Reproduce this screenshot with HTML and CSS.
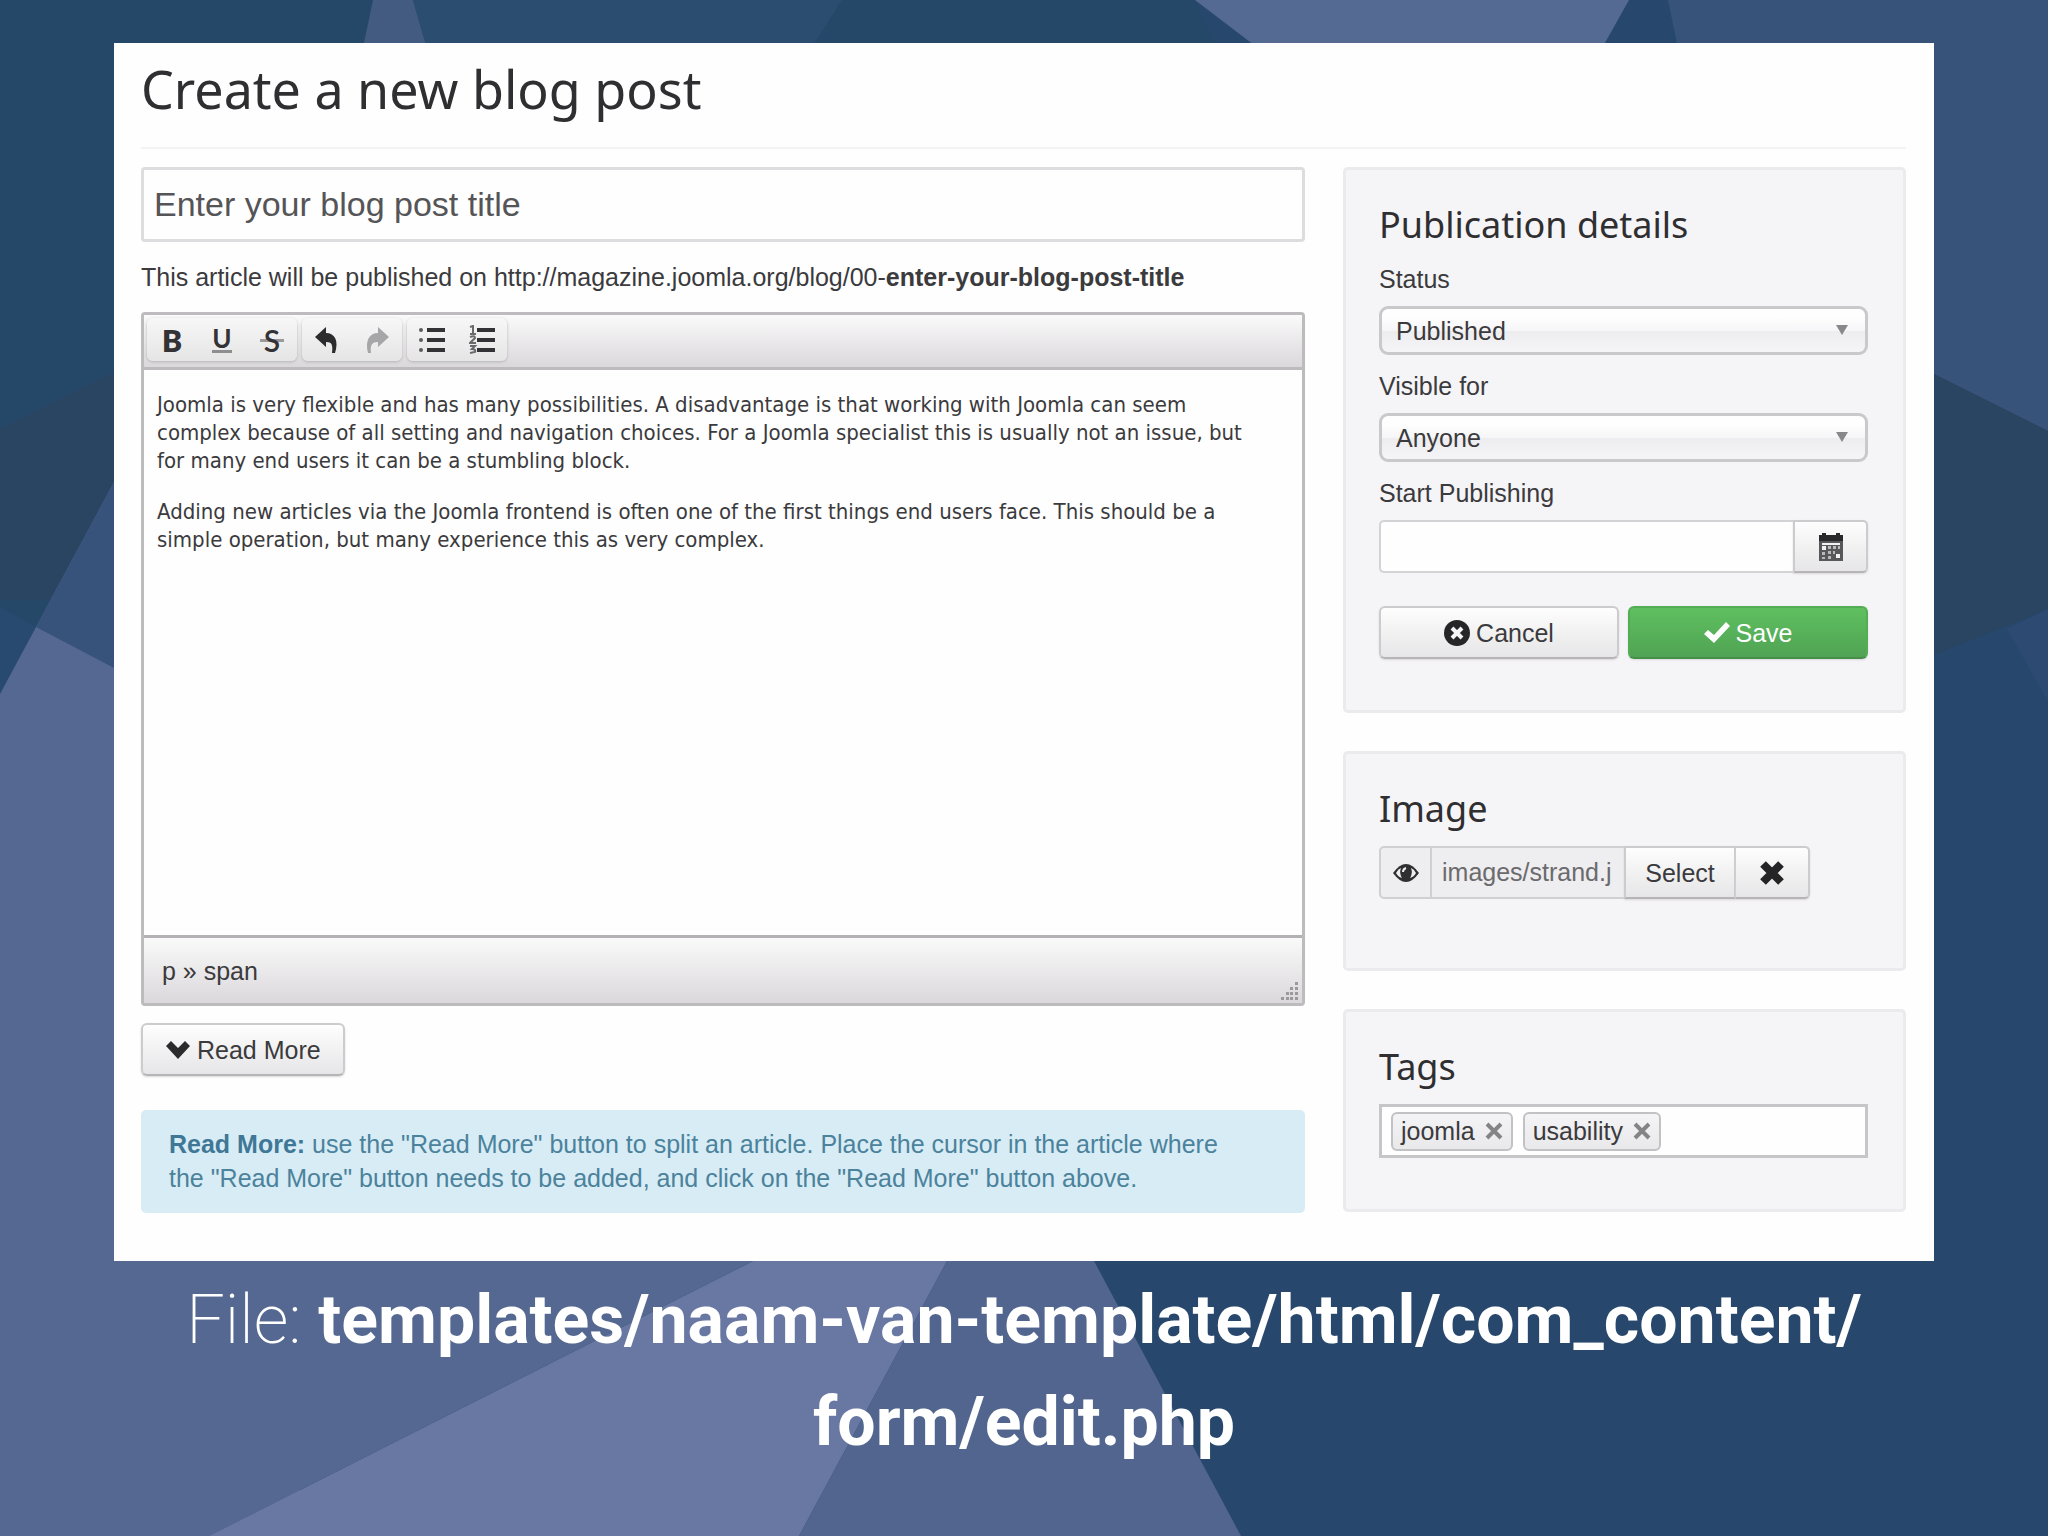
FILE: index.html
```html
<!DOCTYPE html>
<html lang="en">
<head>
<meta charset="utf-8">
<meta name="viewport" content="width=device-width, initial-scale=1">
<title>Create a new blog post</title>
<link rel="stylesheet" href="styles.css">
</head>
<body>
<svg class="backdrop" viewBox="0 0 2048 1536" preserveAspectRatio="none" aria-hidden="true">
  <rect width="2048" height="1536" fill="#27486c"/>
  <path d="M0 0H1195L1500 700H0Z" fill="#254869"/>
  <path d="M373 0H413L500 300H310Z" fill="#435a81"/>
  <path d="M413 0H842L650 300H500Z" fill="#2b4d70"/>
  <path d="M1195 0H1629L1500 230L1300 80Z" fill="#546a93"/>
  <path d="M1668 0H2048V431L1934 374L1720 250Z" fill="#38537a"/>
  <path d="M0 429L114 372L300 340V600H0Z" fill="#2a4562"/>
  <path d="M0 607L36 627L0 694Z" fill="#284a70"/>
  <path d="M0 694L114 482L300 300V1536H0Z" fill="#556891"/>
  <path d="M36 627L114 482H300V700L114 668Z" fill="#38537b"/>
  <path d="M1934 374L2048 431V609L1934 655L1800 660V340Z" fill="#2a4561"/>
  <path d="M2048 609L2007 629L2048 701Z" fill="#2d4b72"/>
  <path d="M0 1200H783L209 1536H0Z" fill="#556891"/>
  <path d="M753 1261H947L799 1536H209Z" fill="#6878a3"/>
  <path d="M0 1200H783L753 1261L209 1536H0Z" fill="#556891"/>
  <path d="M947 1261H1094L1241 1536H799Z" fill="#51658f"/>
</svg>

<main class="slide">
  <form class="post-form" onsubmit="return false">
    <header class="page-header"><h1>Create a new blog post</h1></header>
    <div class="columns">
      <section class="main-column">
        <input class="title-input" type="text" value="Enter your blog post title" aria-label="Blog post title">
        <p class="permalink">This article will be published on http://magazine.joomla.org/blog/00-<strong>enter-your-blog-post-title</strong></p>

        <div class="editor">
          <div class="toolbar">
            <div class="tool-group">
              <button type="button" class="tool tool-bold" aria-label="Bold">B</button>
              <button type="button" class="tool tool-underline" aria-label="Underline"><span>U</span></button>
              <button type="button" class="tool tool-strike" aria-label="Strikethrough"><span>S</span></button>
            </div>
            <div class="tool-group">
              <button type="button" class="tool" aria-label="Undo"><svg width="24" height="26" viewBox="0 0 24 26"><path d="M0 10L11 0V6C20 6 24 14 20 26H17C18 18 17 15 11 15V20Z" fill="#2c2c2e"/></svg></button>
              <button type="button" class="tool" aria-label="Redo"><svg width="24" height="26" viewBox="0 0 24 26"><path d="M24 10L13 0V6C4 6 0 14 3 26H6C5 18 7 15 13 15V20Z" fill="#a6a6a8"/></svg></button>
            </div>
            <div class="tool-group">
              <button type="button" class="tool" aria-label="Bulleted list"><svg width="26" height="26" viewBox="0 0 26 26"><path d="M8 1h18v4H8zM8 11h18v4H8zM8 21h18v4H8z" fill="#333335"/><g fill="#5a5a5c"><circle cx="2" cy="3" r="2"/><circle cx="2" cy="13" r="2"/><circle cx="2" cy="23" r="2"/></g></svg></button>
              <button type="button" class="tool" aria-label="Numbered list"><svg width="26" height="30" viewBox="0 0 26 30"><path d="M8 3h18v4H8zM8 13h18v4H8zM8 23h18v4H8z" fill="#333335"/><path d="M1 2l3-1v8M1 9h6M1 12q5-2 5 1L1 18h6M1 21h5l-3 3q4 0 3 3l-5 1" fill="none" stroke="#6a6a6c" stroke-width="2"/></svg></button>
            </div>
          </div>
          <div class="editor-body" contenteditable="true" role="textbox" aria-label="Article text" spellcheck="false">
            <p>Joomla is very flexible and has many possibilities. A disadvantage is that working with Joomla can seem complex because of all setting and navigation choices. For a Joomla specialist this is usually not an issue, but for many end users it can be a stumbling block.</p>
            <p>Adding new articles via the Joomla frontend is often one of the first things end users face. This should be a simple operation, but many experience this as very complex.</p>
          </div>
          <div class="statusbar">
            <span>p » span</span>
            <svg class="grip" width="18" height="18" viewBox="0 0 18 18" aria-hidden="true"><path d="M14 0h3v3h-3zM14 5h3v3h-3zM14 10h3v3h-3zM14 15h3v3h-3zM9 5h3v3H9zM9 10h3v3H9zM9 15h3v3H9zM5 10h3v3H5zM5 15h3v3H5zM0 15h3v3H0z" fill="#9b999b"/></svg>
          </div>
        </div>

        <button type="button" class="btn read-more"><svg width="26" height="20" viewBox="0 0 26 20" aria-hidden="true"><path d="M1 6L6 1L13 8L20 1L25 6L13 19Z" fill="#2b2b2d"/></svg>Read More</button>

        <p class="alert"><strong>Read More:</strong> use the "Read More" button to split an article. Place the cursor in the article where the "Read More" button needs to be added, and click on the "Read More" button above.</p>
      </section>

      <aside class="side-column">
        <section class="well">
          <h2>Publication details</h2>
          <label for="status">Status</label>
          <div class="select-wrap"><select id="status"><option>Published</option></select></div>
          <label for="visible">Visible for</label>
          <div class="select-wrap"><select id="visible"><option>Anyone</option></select></div>
          <label for="start">Start Publishing</label>
          <div class="date-group">
            <input id="start" type="text">
            <button type="button" class="btn" aria-label="Choose date"><svg width="26" height="28" viewBox="0 0 26 28"><path d="M1 2h3V0h4v2h10V0h4v2h3v6H1z" fill="#29292b"/><path d="M1 8h24v20H1z" fill="#58585a"/><path d="M4 10h18v2H4zM4 13h4v4H4zM18 21h4v4h-4z" fill="#f2f2f3"/><path d="M10 13h3v3h-3zM15 13h3v3h-3zM20 13h2v3h-2zM4 19h3v3H4zM10 18h3v3h-3zM15 18h2v3h-2zM4 24h3v2H4zM10 23h3v3h-3z" fill="#b9b9bb"/></svg></button>
          </div>
          <div class="actions">
            <button type="button" class="btn"><svg width="26" height="26" viewBox="0 0 26 26" aria-hidden="true"><circle cx="13" cy="13" r="13" fill="#262628"/><path d="M8 8L18 18M18 8L8 18" stroke="#f5f5f6" stroke-width="4"/></svg>Cancel</button>
            <button type="submit" class="btn btn-save"><svg width="26" height="22" viewBox="0 0 26 22" aria-hidden="true"><path d="M0 12L4 8L10 13L22 0L26 4L10 21Z" fill="#fff"/></svg>Save</button>
          </div>
        </section>

        <section class="well well-image">
          <h2>Image</h2>
          <div class="image-group">
            <span class="add-on"><svg width="26" height="20" viewBox="0 0 26 20" aria-hidden="true"><path d="M0 10Q13-8 26 10Q13 28 0 10Z" fill="#2f2f31"/><path d="M3 10Q5 6 8 5Q6 10 9 15Q5 14 3 10ZM23 10Q21 6 18 5Q20 10 17 15Q21 14 23 10Z" fill="#eee"/><path d="M10 9Q10 6 13 5" fill="none" stroke="#eee" stroke-width="2"/></svg></span>
            <input type="text" value="images/strand.j" readonly aria-label="Image path">
            <button type="button" class="btn">Select</button>
            <button type="button" class="btn clear" aria-label="Remove image"><svg width="26" height="26" viewBox="0 0 26 26"><path d="M4 4L22 22M22 4L4 22" stroke="#242426" stroke-width="8"/></svg></button>
          </div>
        </section>

        <section class="well">
          <h2>Tags</h2>
          <div class="tag-box">
            <span class="tag">joomla<button type="button" aria-label="Remove joomla"><svg width="18" height="18" viewBox="0 0 18 18"><path d="M2 2L16 16M16 2L2 16" stroke="#848486" stroke-width="4"/></svg></button></span>
            <span class="tag">usability<button type="button" aria-label="Remove usability"><svg width="18" height="18" viewBox="0 0 18 18"><path d="M2 2L16 16M16 2L2 16" stroke="#848486" stroke-width="4"/></svg></button></span>
            <input type="text" aria-label="Add a tag">
          </div>
        </section>
      </aside>
    </div>
  </form>

  <p class="caption"><span>File:</span> templates/naam-van-template/html/com_content/<br>form/edit.php</p>
</main>
</body>
</html>
```
FILE: styles.css
```css
* { box-sizing: border-box; }

body {
  margin: 0;
  min-height: 100vh;
  background: #27486c;
  color: #3b3a3d;
  font: 25px/32px "Liberation Sans", Arial, sans-serif;
}

.backdrop {
  position: fixed;
  inset: 0;
  z-index: -1;
  width: 100%;
  height: 100%;
}

h1, h2, p { margin: 0; }

input, select, button {
  min-width: 0;
  margin: 0;
  color: inherit;
  font: inherit;
}

.slide { padding: 43px 114px 0; }

.post-form {
  padding: 16px 28px 48px 27px;
  background: #fefefe;
}

.page-header {
  margin-bottom: 18px;
  padding-bottom: 28px;
  border-bottom: 2px solid #f3f2f4;
}

h1, h2 {
  color: #2f2e31;
  font-family: "Noto Sans", "Open Sans", sans-serif;
  font-weight: 400;
}

h1 { font-size: 52px; line-height: 60px; }
h2 { font-size: 36px; line-height: 48px; }

.columns {
  display: grid;
  grid-template-columns: minmax(0, 1164fr) minmax(0, 563fr);
  gap: 38px;
}

/* Main column */

.title-input {
  display: block;
  width: 100%;
  height: 75px;
  padding: 0 10px;
  border: 3px solid #dddcde;
  border-radius: 4px;
  background: #fefefe;
  color: #555457;
  font-size: 34px;
}

.permalink {
  margin: 18px 0;
  line-height: 34px;
}

.editor {
  border: 3px solid #bdbbbe;
  border-radius: 4px;
}

.toolbar {
  display: flex;
  gap: 5px;
  height: 55px;
  padding: 3px 3px 6px;
  border-bottom: 3px solid #bdbbbe;
  background: linear-gradient(#fbfafb, #dad8da);
}

.tool-group {
  display: flex;
  border-radius: 6px;
  background: linear-gradient(#f8f7f8, #e6e5e6);
  box-shadow: 0 1px 3px #b5b3b6;
}

.tool {
  display: flex;
  align-items: center;
  justify-content: center;
  width: 50px;
  padding: 0;
  border: 0;
  background: none;
  color: #333235;
  font-family: Lato, sans-serif;
}

.tool-bold { font-size: 30px; font-weight: 800; }
.tool-underline { font-size: 26px; font-weight: 700; }
.tool-underline span { line-height: 24px; border-bottom: 3px solid #8e8d90; }
.tool-strike { font-size: 30px; font-weight: 600; }
.tool-strike span {
  padding: 0 4px;
  background: linear-gradient(#9a999c, #9a999c) 0 52% / 100% 3px no-repeat;
}

.editor-body {
  min-height: 565px;
  padding: 21px 42px 21px 13px;
  background: #fefefe;
  font-family: "DejaVu Sans Condensed", "Noto Sans", sans-serif;
  font-size: 22px;
  line-height: 28px;
}

.editor-body p + p { margin-top: 23px; }

.statusbar {
  display: flex;
  align-items: center;
  justify-content: space-between;
  height: 68px;
  padding: 0 3px 0 18px;
  border-top: 3px solid #b3b1b4;
  background: linear-gradient(#fbfafb, #dad8da);
}

.grip { align-self: flex-end; margin-bottom: 3px; }

.btn {
  display: flex;
  align-items: center;
  justify-content: center;
  gap: 6px;
  height: 53px;
  padding: 0;
  border: 2px solid #cccbcd;
  border-bottom-color: #b6b4b7;
  border-radius: 6px;
  background: linear-gradient(#fefefe, #e6e5e7);
  box-shadow: 0 1px 2px #d8d7d9;
}

.read-more { margin-top: 17px; padding: 0 22px; }

.alert {
  margin-top: 34px;
  padding: 17px 60px 18px 28px;
  border-radius: 5px;
  background: #d8ecf5;
  color: #4b829c;
  line-height: 34px;
}

.alert strong { color: #3f7896; }

/* Side column */

.side-column {
  display: flex;
  flex-direction: column;
  gap: 38px;
}

.well {
  padding: 31px 35px 51px 33px;
  border: 3px solid #ebeaec;
  border-radius: 5px;
  background: #f5f4f7;
}

.well-image { padding-bottom: 69px; }

.well label {
  display: block;
  margin: 15px 0 11px;
}

.well h2 + label { margin-top: 14px; }

.select-wrap { position: relative; }

.select-wrap::after {
  position: absolute;
  top: 19px;
  right: 20px;
  width: 12px;
  height: 10px;
  background: #88878a;
  clip-path: polygon(0 0, 100% 0, 50% 100%);
  content: "";
  pointer-events: none;
}

select {
  display: block;
  width: 100%;
  height: 49px;
  padding: 0 14px;
  appearance: none;
  border: 3px solid #c9c8ca;
  border-radius: 9px;
  background: linear-gradient(#fefefe 20%, #f6f5f7 50%, #edecee 52%, #f5f4f6);
}

.date-group { display: flex; }

.date-group input {
  flex: 1;
  height: 53px;
  border: 2px solid #d3d2d5;
  border-right: 0;
  border-radius: 5px 0 0 5px;
  background: #fefefe;
}

.date-group .btn {
  width: 75px;
  border-radius: 0 5px 5px 0;
}

.actions {
  display: grid;
  grid-template-columns: 1fr 1fr;
  gap: 9px;
  margin-top: 33px;
}

.btn-save {
  border-color: #53ad55;
  border-bottom-color: #468f48;
  background: linear-gradient(#5fc060, #50a353);
  color: #fff;
}

.image-group {
  display: flex;
  width: 431px;
  margin-top: 13px;
}

.image-group .add-on,
.image-group input {
  height: 53px;
  border: 2px solid #d0cfd1;
  background: #eeedef;
}

.image-group .add-on {
  display: flex;
  align-items: center;
  justify-content: center;
  width: 53px;
  border-radius: 5px 0 0 5px;
}

.image-group input {
  width: 192px;
  padding: 0 10px;
  border-width: 2px 0;
  color: #6b6a6d;
}

.image-group .btn {
  width: 112px;
  border-radius: 0;
}

.image-group .clear {
  width: 74px;
  border-left: 0;
  border-radius: 0 5px 5px 0;
}

.tag-box {
  display: flex;
  align-items: center;
  gap: 10px;
  height: 54px;
  margin-top: 13px;
  padding: 0 9px;
  border: 3px solid #c6c5c7;
  background: #fefefe;
}

.tag-box input {
  flex: 1;
  border: 0;
  background: none;
}

.tag {
  display: flex;
  align-items: center;
  gap: 10px;
  height: 39px;
  padding: 0 8px;
  border: 2px solid #c2c1c3;
  border-radius: 6px;
  background: linear-gradient(#f4f3f5, #e9e8ea);
}

.tag button {
  display: flex;
  padding: 0;
  border: 0;
  background: none;
}

.caption {
  padding-top: 8px;
  color: #fff;
  font: 700 68px/102px Roboto, sans-serif;
  text-align: center;
}

.caption span { font-weight: 200; }
```
